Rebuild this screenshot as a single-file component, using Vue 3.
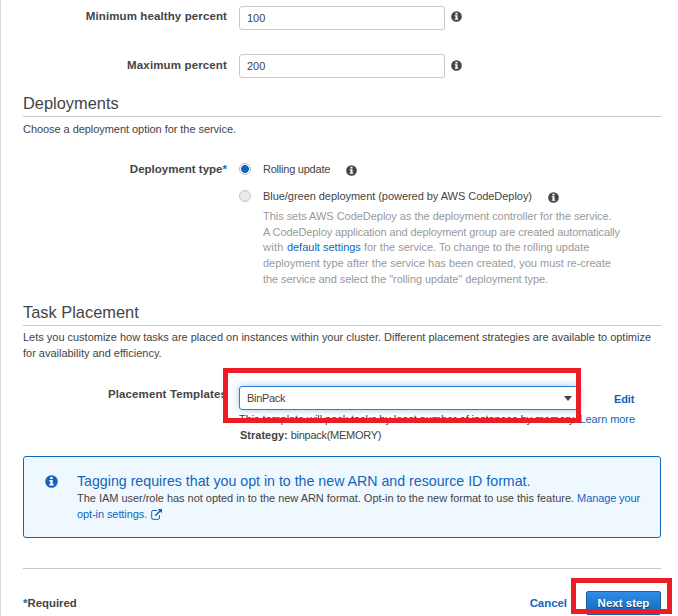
<script setup>
import { h } from 'vue'

const InfoIcon = (props) =>
  h('svg', { viewBox: '0 0 12 12', width: props.size || 11, height: props.size || 11 }, [
    h('circle', { cx: 6, cy: 6, r: 5.8, fill: 'currentColor' }),
    h('path', { fill: '#fff', d: 'M4.8 1.8h2.3v1.9H4.8zM4 4.6h3.1v3.8H8v1.2H4V8.4h.9V5.8H4z' }),
  ])
InfoIcon.props = ['size']

// Tracking is in pixels per character.
const description = [
  { track: -0.036, parts: [{ t: 'This sets AWS CodeDeploy as the deployment controller for the service.' }] },
  { track: -0.105, parts: [{ t: 'A CodeDeploy application and deployment group are created automatically' }] },
  { track: 0, parts: [{ t: 'with ', wide: true }, { t: 'default settings', link: true }, { t: ' for the service. To change to the rolling update' }] },
  { track: 0, parts: [{ t: 'deployment type after the service has been created, you must re-create' }] },
  { track: -0.058, parts: [{ t: 'the service and select the "rolling update" deployment type.' }] },
]
</script>

<template>
  <main class="page">
    <div class="field min">
      <label class="label l-min">Minimum healthy percent</label>
      <div class="input">100</div>
      <InfoIcon class="info" />
    </div>
    <div class="field max">
      <label class="label l-max">Maximum percent</label>
      <div class="input">200</div>
      <InfoIcon class="info" />
    </div>

    <h2 class="heading h-deploy">Deployments</h2>
    <p class="intro t-choose">Choose a deployment option for the service.</p>

    <section class="deploy">
      <div class="label l-type">Deployment type<span class="star">*</span></div>
      <div class="options">
        <div class="option rolling">
          <span class="radio checked"></span>
          <span class="t-roll">Rolling update</span>
          <InfoIcon class="info" />
        </div>
        <div class="option">
          <span class="radio disabled"></span>
          <span class="t-blue">Blue/green deployment (powered by AWS CodeDeploy)</span>
          <InfoIcon class="info" />
        </div>
        <div class="desc">
          <div v-for="(line, i) in description" :key="i" class="line" :class="{ tight: i === 1 }" :style="{ letterSpacing: line.track + 'px' }"><span v-for="(p, j) in line.parts" :key="j" :class="{ link: p.link, wide: p.wide }">{{ p.t }}</span></div>
        </div>
      </div>
    </section>

    <h2 class="heading h-task">Task Placement</h2>
    <p class="intro lets">Lets you customize how tasks are placed on instances within your cluster. Different placement strategies are available to optimize<br />for availability and efficiency.</p>

    <section class="placement">
      <div class="label l-place">Placement Templates</div>
      <div class="place-main">
        <div class="select-row">
          <div class="select"><span class="t-bin">BinPack</span><span class="caret"></span></div>
          <a class="edit">Edit</a>
        </div>
        <div class="help">This template will pack tasks by least number of instances by memory. <a class="link">Learn more</a></div>
        <div class="strategy"><b>Strategy:</b> <span class="t-mem">binpack(MEMORY)</span></div>
      </div>
      <div class="mark mark-select"></div>
    </section>

    <section class="alert">
      <InfoIcon class="alert-icon" :size="13" />
      <div>
        <div class="alert-title">Tagging requires that you opt in to the new ARN and resource ID format.</div>
        <div class="line"><span class="t-iam">The IAM user/role has not opted in to the new ARN format. Opt-in to the new format to use this feature. </span><a class="link t-manage">Manage your</a></div>
        <div class="line link ext">
          <span class="t-opt">opt-in settings.</span>
          <svg width="12" height="11" viewBox="0 0 12 11" fill="none" stroke="currentColor">
            <path d="M6 1.5H2Q.7 1.5.7 2.8V9Q.7 10.3 2 10.3H7.2Q8.5 10.3 8.5 9V6.2" stroke-width="1" />
            <path d="M4.2 6.8 9.3 1.7" stroke-width="1.6" />
            <path d="M6.7 0H11V4.3Z" fill="currentColor" stroke="none" />
          </svg>
        </div>
      </div>
    </section>

    <footer class="footer">
      <span class="required"><span class="star">*</span>Required</span>
      <a class="cancel">Cancel</a>
      <button class="next">Next step</button>
      <div class="mark mark-next"></div>
    </footer>
  </main>
</template>

<style>
body {
  background: #fff;
  overflow: hidden;
}
</style>

<style scoped>
.page {
  box-sizing: border-box;
  width: 678px;
  height: 616px;
  overflow: hidden;
  padding: 6px 17px 0 22px;
  border-left: 1px solid #d9d9d9;
  color: #444;
  font: 11px/16px "Liberation Sans", Arial, sans-serif;
  white-space: nowrap;
}
.field {
  display: flex;
  height: 48px;
}
.label {
  box-sizing: border-box;
  flex: none;
  width: 216px;
  padding-right: 12px;
  text-align: right;
  font-size: 11.5px;
  font-weight: bold;
}
.l-min { padding-top: 2px; letter-spacing: 0.11px; }
.l-max { padding-top: 3px; letter-spacing: 0.14px; }
.l-type { letter-spacing: 0; }
.l-place { padding-top: 5px; letter-spacing: 0.12px; }
.input {
  box-sizing: border-box;
  width: 206px;
  height: 24px;
  padding: 3px 7px;
  border: 1px solid #c8c8c8;
  border-radius: 3px;
}
.info {
  flex: none;
  color: #444;
}
.field .info {
  margin: 5px 0 0 6px;
}
.field.max .info {
  margin-top: 6px;
}
.heading {
  box-sizing: border-box;
  height: 24px;
  margin: 0;
  border-bottom: 1px solid #c8c8c8;
  font-size: 16.4px;
  font-weight: normal;
  line-height: 21px;
}
.h-deploy { margin-top: -9px; }
.h-task { margin-top: 15px; }
.intro {
  margin: 4px 0 0;
}
.lets {
  margin-top: 3px;
  letter-spacing: -0.012px;
}
.t-choose { letter-spacing: -0.053px; }
.deploy {
  display: flex;
  height: 126px;
  margin-top: 24px;
}
.star {
  color: #1166bb;
}
.option {
  display: flex;
  align-items: flex-start;
  height: 20px;
}
.option.rolling {
  height: 27px;
}
.radio {
  box-sizing: border-box;
  flex: none;
  width: 12px;
  height: 12px;
  margin: 2px 12px 0 0;
  border: 1px solid #b9b9b9;
  border-radius: 50%;
}
.checked {
  background: radial-gradient(circle, #0f66bd 0 3.6px, #fff 4.3px);
}
.disabled {
  background: #ebebeb;
  border-color: #c4c4c4;
}
.t-roll { letter-spacing: -0.23px; }
.t-blue { letter-spacing: -0.043px; }
.option .info {
  margin: 4px 0 0 16px;
}
.desc {
  padding-left: 24px;
  color: #999;
}
.line {
  height: 16px;
  white-space: pre;
}
.line.tight {
  height: 15px;
}
.link {
  color: #1166bb;
}
.wide {
  letter-spacing: 0.25px;
}
.placement {
  position: relative;
  display: flex;
  height: 63px;
  margin-top: 20px;
}
.place-main {
  padding-top: 5px;
}
.select-row {
  display: flex;
  align-items: center;
  height: 24px;
}
.select {
  box-sizing: border-box;
  display: flex;
  align-items: center;
  justify-content: space-between;
  width: 340px;
  height: 24px;
  padding: 0 7px;
  border: 1px solid #2e7fd6;
  border-radius: 3px;
  box-shadow: 0 0 7px rgba(70, 150, 230, 0.55);
}
.t-bin { letter-spacing: -0.3px; }
.caret {
  margin-right: -1px;
  border: 4.5px solid transparent;
  border-top: 5px solid #444;
  border-bottom: 0;
}
.edit {
  margin: 2px 0 0 35px;
  color: #1166bb;
  font-weight: bold;
  letter-spacing: -0.1px;
}
.help {
  margin-top: 1px;
  letter-spacing: -0.069px;
}
.strategy {
  padding-left: 1px;
}
.t-mem { letter-spacing: -0.28px; }
.mark {
  position: absolute;
  box-sizing: border-box;
  border: 5px solid #ed1c24;
}
.mark-select {
  top: -13px;
  left: 200px;
  width: 358px;
  height: 55px;
}
.alert {
  box-sizing: border-box;
  display: flex;
  height: 82px;
  margin-top: 12px;
  padding: 15px 0 0 21px;
  border: 1px solid #1166bb;
  border-radius: 3px;
  background: #f0f8ff;
}
.alert-icon {
  flex: none;
  margin: 3px 19px 0 0;
  color: #1166bb;
}
.alert-title {
  height: 18px;
  color: #1166bb;
  font-size: 14.2px;
  line-height: 18px;
}
.t-iam { letter-spacing: -0.03px; }
.t-manage { letter-spacing: -0.11px; }
.t-opt { letter-spacing: -0.09px; }
.ext {
  display: flex;
  gap: 4px;
}
.ext svg {
  margin-top: 3px;
}
.footer {
  position: relative;
  display: flex;
  height: 48px;
  margin-top: 30px;
  padding-top: 22px;
  border-top: 1px solid #c8c8c8;
  font-size: 11.4px;
  font-weight: bold;
}
.required {
  padding-top: 4px;
}
.cancel {
  margin-left: auto;
  padding: 4px 19px 0 0;
  color: #1166bb;
}
.next {
  box-sizing: border-box;
  width: 75px;
  height: 24px;
  padding: 0;
  border: 1px solid #1861ae;
  border-radius: 2px;
  background: linear-gradient(#2f8de8, #1467bb);
  color: #fff;
  font: bold 11.5px/16px "Liberation Sans", Arial, sans-serif;
  text-shadow: 0 1px 1px rgba(0, 0, 0, 0.5);
}
.mark-next {
  top: 9px;
  left: 548px;
  width: 101px;
  height: 36px;
}
</style>
